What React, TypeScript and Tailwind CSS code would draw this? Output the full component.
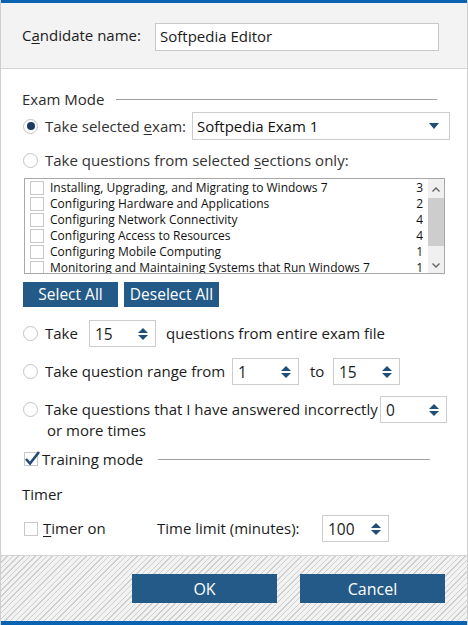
import React from "react";

const sections: [string, number][] = [
  ["Installing, Upgrading, and Migrating to Windows 7", 3],
  ["Configuring Hardware and Applications", 2],
  ["Configuring Network Connectivity", 4],
  ["Configuring Access to Resources", 4],
  ["Configuring Mobile Computing", 1],
  ["Monitoring and Maintaining Systems that Run Windows 7", 1],
];

function Radio({ checked }: { checked?: boolean }) {
  return (
    <span className="flex size-[15px] shrink-0 items-center justify-center rounded-full border border-[#c4c4c4] bg-white">
      {checked && <span className="size-[8px] rounded-full bg-[#1d3a5f]" />}
    </span>
  );
}

function Box({ checked }: { checked?: boolean }) {
  return (
    <span className="relative block size-[14px] shrink-0 border border-[#c8c8c8] bg-white">
      {checked && (
        <svg className="absolute -left-[1px] -top-[3px]" width="17" height="17" viewBox="0 0 17 17">
          <path d="M2 9 L6 13.5 L15 2" fill="none" stroke="#1f4a75" strokeWidth="2.6" />
        </svg>
      )}
    </span>
  );
}

function Spin({ value, width = "w-[67px]" }: { value: string; width?: string }) {
  return (
    <div className={`flex h-[27px] ${width} shrink-0 items-center justify-between border border-[#cccccc] bg-white pl-[5px] pr-[7px]`}>
      <span className="pt-[2px] text-[15.5px]">{value}</span>
      <svg width="10" height="14" viewBox="0 0 10 14">
        <path d="M0 6 L5 1 L10 6 Z" fill="#1f4e79" />
        <path d="M0 8 L5 13 L10 8 Z" fill="#1f4e79" />
      </svg>
    </div>
  );
}

function BlueButton({ children, className }: { children: React.ReactNode; className: string }) {
  return (
    <button className={`flex items-center justify-center bg-[#245a87] text-white ${className}`}>
      {children}
    </button>
  );
}

export default function App() {
  return (
    <div
      className="flex h-[625px] w-[468px] flex-col overflow-hidden border-x border-[#cfcfcf] bg-white text-[15px] text-[#1b1b1b]"
      style={{ fontFamily: '"Open Sans", "Noto Sans", sans-serif' }}
    >
      <div className="h-[3px] shrink-0 bg-[#0a63b0]" />

      {/* candidate header */}
      <div className="flex h-[66px] shrink-0 items-center border-b border-[#d4d4d4] bg-[#f3f3f3] pl-[21px]">
        <span className="w-[133px]">
          C<span className="underline underline-offset-2">a</span>ndidate name:
        </span>
        <div className="mt-[2px] flex h-[28px] w-[284px] items-center border border-[#c9c9c9] bg-white pl-[4px]">
          Softpedia Editor
        </div>
      </div>

      {/* main body */}
      <div className="flex flex-1 flex-col pl-[21px] pr-[20px] pt-[20px]">
        <div className="flex h-[20px] items-center">
          <span className="text-[#2b2b2b]">Exam Mode</span>
          <div className="ml-[12px] mr-[10px] h-px flex-1 bg-[#a0a0a0]" />
        </div>

        <div className="mt-[3px] flex h-[28px] items-center">
          <span className="ml-[1px]"><Radio checked /></span>
          <span className="ml-[7px] w-[147px] text-[#333]">
            Take selected <span className="underline underline-offset-2">e</span>xam:
          </span>
          <div className="-mr-[3px] flex h-[28px] flex-1 items-center justify-between border border-[#cccccc] pl-[4px] pr-[10px]">
            <span className="text-[#111]">Softpedia Exam 1</span>
            <svg width="10" height="6" viewBox="0 0 10 6">
              <path d="M0 0 L10 0 L5 6 Z" fill="#1f4e79" />
            </svg>
          </div>
        </div>

        <div className="mt-[10px] flex h-[20px] items-center">
          <span className="ml-[1px]"><Radio /></span>
          <span className="ml-[7px] text-[#333]">
            Take questions from selected <span className="underline underline-offset-2">s</span>ections only:
          </span>
        </div>

        <div className="ml-[2px] mr-[2px] mt-[8px] flex h-[96px] border border-[#a8a8a8] text-[12px] text-[#111]">
          <div className="flex flex-1 flex-col overflow-hidden pl-[5px] pt-[1px]">
            {sections.map(([name, n]) => (
              <div key={name} className="flex h-[16px] shrink-0 items-center">
                <Box />
                <span className="ml-[6px] flex-1 whitespace-nowrap">{name}</span>
                <span className="w-[10px] text-right">{n}</span>
              </div>
            ))}
          </div>
          <div className="ml-[5px] flex w-[16px] flex-col items-center bg-[#f0f0f0]">
            <svg className="mt-[8px]" width="8" height="5" viewBox="0 0 8 5">
              <path d="M0.5 4.5 L4 1 L7.5 4.5" fill="none" stroke="#606060" strokeWidth="1.3" />
            </svg>
            <div className="mt-[6px] h-[48px] w-[16px] bg-[#cdcdcd]" />
            <svg className="mt-[17px]" width="8" height="5" viewBox="0 0 8 5">
              <path d="M0.5 0.5 L4 4 L7.5 0.5" fill="none" stroke="#606060" strokeWidth="1.3" />
            </svg>
          </div>
        </div>

        <div className="ml-[1px] mt-[8px] flex gap-[6px] text-[15.5px]">
          <BlueButton className="h-[25px] w-[95px]">Select All</BlueButton>
          <BlueButton className="h-[25px] w-[95px]">Deselect All</BlueButton>
        </div>

        <div className="mt-[13px] flex h-[27px] items-center">
          <span className="ml-[1px]"><Radio /></span>
          <span className="ml-[7px] w-[44px]">Take</span>
          <Spin value="15" />
          <span className="ml-[10px]">questions from entire exam file</span>
        </div>

        <div className="mt-[11px] flex h-[27px] items-center">
          <span className="ml-[1px]"><Radio /></span>
          <span className="ml-[7px] w-[187px]">Take question range from</span>
          <Spin value="1" />
          <span className="ml-[11px] w-[23px]">to</span>
          <Spin value="15" />
        </div>

        <div className="mt-[11px] flex h-[27px] items-center">
          <span className="ml-[1px]"><Radio /></span>
          <span className="ml-[7px] w-[336px] whitespace-nowrap">Take questions that I have answered incorrectly</span>
          <Spin value="0" />
        </div>
        <div className="ml-[25px] -mt-[3px] h-[20px] leading-[20px]">or more times</div>

        <div className="mt-[10px] flex h-[18px] items-center">
          <span className="ml-[2px]"><Box checked /></span>
          <span className="ml-[4px]">Training mode</span>
          <div className="ml-[15px] mr-[17px] h-px flex-1 bg-[#a0a0a0]" />
        </div>

        <div className="mt-[16px] flex h-[20px] items-center">Timer</div>

        <div className="mt-[11px] flex h-[27px] items-center">
          <span className="ml-[2px]"><Box /></span>
          <span className="ml-[5px] w-[114px]">
            <span className="underline underline-offset-2">T</span>imer on
          </span>
          <span className="w-[165px]">Time limit (minutes):</span>
          <Spin value="100" />
        </div>
      </div>

      {/* footer */}
      <div className="flex h-[66px] shrink-0 items-center justify-end gap-[23px] border-t border-[#d4d4d4] bg-[repeating-linear-gradient(135deg,#cfcfcf_0px,#cfcfcf_1px,#f2f2f2_1px,#f2f2f2_4px)] pr-[22px]">
        <BlueButton className="h-[29px] w-[145px] text-[16px]">OK</BlueButton>
        <BlueButton className="h-[29px] w-[145px] text-[16px]">Cancel</BlueButton>
      </div>
      <div className="h-[4px] shrink-0 bg-[#0a63b0]" />
    </div>
  );
}
